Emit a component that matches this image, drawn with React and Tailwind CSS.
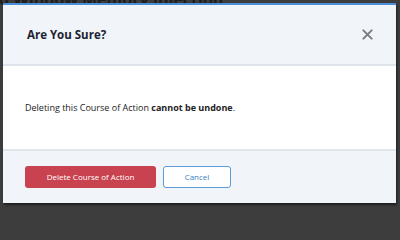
import React from "react";

export default function App() {
  return (
    <div className="relative w-screen h-screen min-w-[400px] min-h-[208px] overflow-hidden bg-[#3d3d3d]" style={{ fontFamily: '"Open Sans", sans-serif' }}>
      <div className="absolute left-[-1px] top-[-13px] text-[16px] font-bold text-[#1e1e1e] whitespace-nowrap">d Window Memory Injection</div>
      <div className="absolute left-[3px] top-[3px] w-[393px] h-[200px] flex flex-col bg-white border-t-[2px] border-[#4a8fd8] shadow-[1px_2px_2px_rgba(0,0,0,0.5)]">
        <div className="h-[61px] bg-[#f1f4f9] border-b-[2px] border-[#dfe3ea] flex items-center justify-between pl-[24px] pr-[23px] shrink-0">
          <div className="text-[11.5px] font-bold text-[#1c2333]">Are You Sure?</div>
          <svg width="11" height="11" viewBox="0 0 12 12" className="text-[#7a7d82]">
            <path d="M1.5 1.5 L10.5 10.5 M10.5 1.5 L1.5 10.5" stroke="currentColor" strokeWidth="2.2" strokeLinecap="round" />
          </svg>
        </div>
        <div className="h-[83px] flex items-center pl-[22px] text-[9px] text-[#222] shrink-0">
          <span>Deleting this Course of Action <b className="font-bold">cannot be undone</b>.</span>
        </div>
        <div className="flex-1 bg-[#f1f4f9] border-t-[2px] border-[#e2e6ec] flex items-center gap-[7px] pl-[22px] pb-[1px]">
          <button className="w-[131px] h-[22px] rounded-[3px] bg-[#c9424f] text-white text-[8px] font-medium">Delete Course of Action</button>
          <button className="w-[68px] h-[22px] rounded-[3px] bg-white border-[1.5px] border-[#5a9bd8] text-[#3c7fc6] text-[8px] font-medium">Cancel</button>
        </div>
      </div>
    </div>
  );
}
